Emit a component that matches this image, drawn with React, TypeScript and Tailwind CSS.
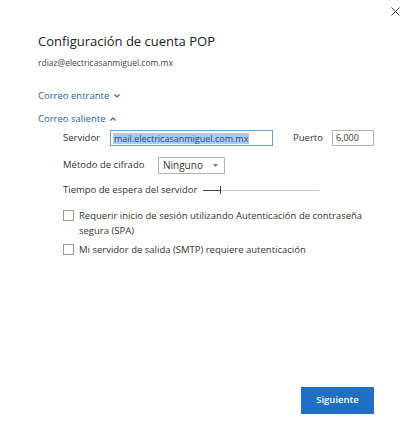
import React from "react"

export default function App() {
  return (
    <div
      className="relative w-[406px] h-[441px] bg-white text-[#333]"
      style={{ fontFamily: '"Open Sans", "Noto Sans", sans-serif' }}
    >
      {/* close */}
      <button className="absolute right-[4px] top-[4px] w-[14px] h-[14px] flex items-center justify-center">
        <svg width="9" height="9" viewBox="0 0 9 9">
          <path d="M0.5 0.5 L8.5 8.5 M8.5 0.5 L0.5 8.5" stroke="#444" strokeWidth="1" />
        </svg>
      </button>

      <div className="flex flex-col pl-[38px] pt-[32px] pr-[32px]">
        <h1 className="text-[13px] leading-[18px] text-[#222]">Configuración de cuenta POP</h1>
        <p className="mt-[7px] text-[8.5px] leading-[12px] text-[#444]">rdiaz@electricasanmiguel.com.mx</p>

        {/* sections */}
        <div className="mt-[21px] flex items-center gap-[5px] text-[9.5px] leading-[12px] text-[#2b5f9e]">
          <span>Correo entrante</span>
          <svg width="6" height="4" viewBox="0 0 6 4">
            <path d="M0.5 0.5 L3 3 L5.5 0.5" stroke="#2b5f9e" strokeWidth="1.1" fill="none" />
          </svg>
        </div>
        <div className="mt-[11px] flex items-center gap-[5px] text-[9.5px] leading-[12px] text-[#2b5f9e]">
          <span>Correo saliente</span>
          <svg width="6" height="4" viewBox="0 0 6 4">
            <path d="M0.5 3.5 L3 1 L5.5 3.5" stroke="#2b5f9e" strokeWidth="1.1" fill="none" />
          </svg>
        </div>

        <div className="pl-[25px] flex flex-col text-[9.5px] text-[#333]">
          {/* server row */}
          <div className="mt-[5px] flex items-center h-[16px]">
            <span className="w-[47px]">Servidor</span>
            <div className="w-[163px] h-[16px] border border-[#6f9fd8] flex items-center px-[2px]">
              <span className="bg-[#a9cbee] text-[#1d4f8f] text-[9px] leading-[11px] px-[1px]">
                mail.electricasanmiguel.com.mx
              </span>
            </div>
            <span className="ml-[20px] w-[39px]">Puerto</span>
            <div className="w-[42px] h-[16px] border border-[#b4b4b4] flex items-center px-[3px] text-[9px]">
              6,000
            </div>
          </div>

          {/* encryption */}
          <div className="mt-[11px] flex items-center h-[17px]">
            <span className="w-[95px]">Método de cifrado</span>
            <div className="w-[67px] h-[17px] border border-[#b4b4b4] flex items-center justify-between pl-[4px] pr-[6px] text-[10px]">
              <span>Ninguno</span>
              <svg width="5" height="3" viewBox="0 0 5 3">
                <path d="M0 0 L5 0 L2.5 3 Z" fill="#777" />
              </svg>
            </div>
          </div>

          {/* timeout */}
          <div className="mt-[9px] flex items-center h-[14px]">
            <span className="w-[140px]">Tiempo de espera del servidor</span>
            <div className="relative w-[116px] h-[10px] flex items-center">
              <div className="w-full h-[1px] bg-[#c8c8c8]" />
              <div className="absolute left-0 w-[18px] h-[1px] bg-[#444]" />
              <div className="absolute left-[17px] top-[1px] w-[1px] h-[8px] bg-[#444]" />
            </div>
          </div>

          {/* checkboxes */}
          <div className="mt-[11px] flex items-start gap-[5px]">
            <div className="mt-[2px] w-[11px] h-[11px] border border-[#9a9a9a] shrink-0" />
            <span className="leading-[15px] w-[300px]">
              Requerir inicio de sesión utilizando Autenticación de contraseña segura (SPA)
            </span>
          </div>
          <div className="mt-[4px] flex items-start gap-[5px]">
            <div className="mt-[2px] w-[11px] h-[11px] border border-[#9a9a9a] shrink-0" />
            <span className="leading-[15px]">Mi servidor de salida (SMTP) requiere autenticación</span>
          </div>
        </div>
      </div>

      {/* footer button */}
      <div className="absolute left-0 right-0 top-[387px] flex justify-end pr-[32px]">
        <button className="w-[73px] h-[27px] bg-[#1f6fc2] text-white text-[9.5px] font-semibold">
          Siguiente
        </button>
      </div>
    </div>
  )
}
